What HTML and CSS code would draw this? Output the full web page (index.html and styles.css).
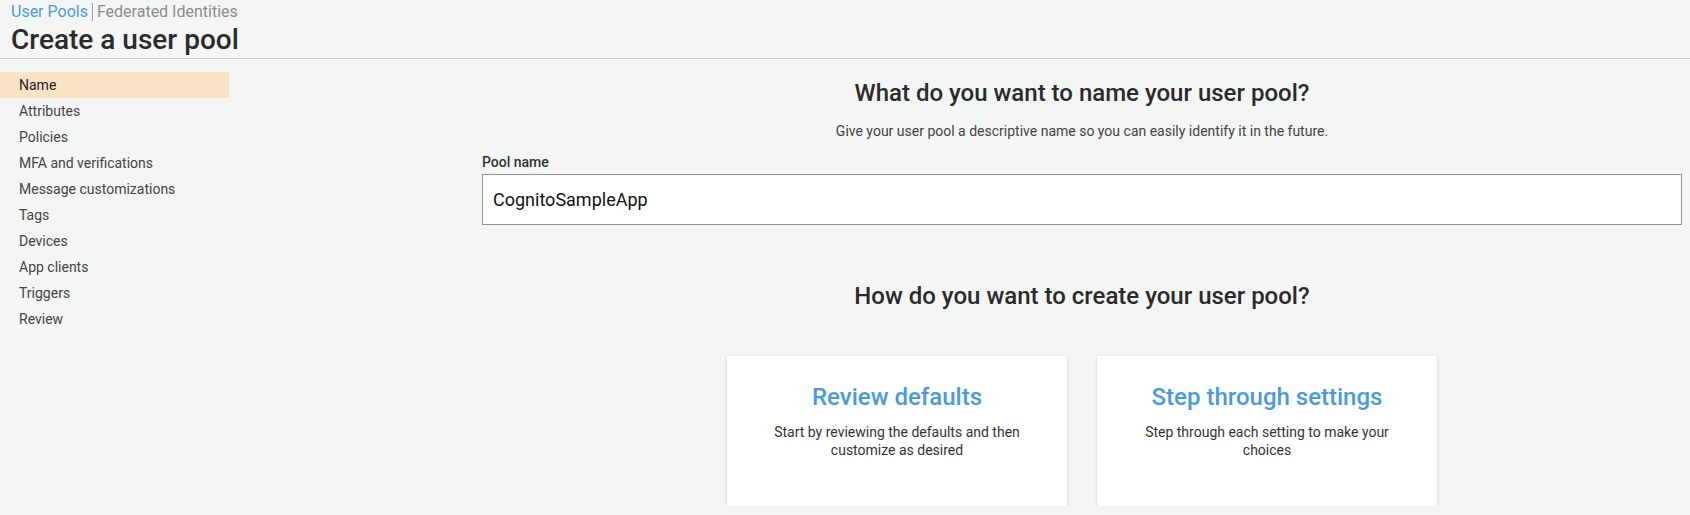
FILE: index.html
```html
<!DOCTYPE html>
<html lang="en">
<head>
<meta charset="utf-8">
<title>Create a user pool</title>
<link rel="stylesheet" href="styles.css">
</head>
<body>
<header class="page-header">
  <div class="crumbs"><a class="crumb-active" href="#">User Pools</a><span class="crumb-sep"></span><a class="crumb" href="#">Federated Identities</a></div>
  <h1 class="page-title">Create a user pool</h1>
</header>
<div class="layout">
  <nav class="steps">
    <div class="step step-current">Name</div>
    <div class="step">Attributes</div>
    <div class="step">Policies</div>
    <div class="step">MFA and verifications</div>
    <div class="step">Message customizations</div>
    <div class="step">Tags</div>
    <div class="step">Devices</div>
    <div class="step">App clients</div>
    <div class="step">Triggers</div>
    <div class="step">Review</div>
  </nav>
  <main class="content">
    <h2 class="section-title">What do you want to name your user pool?</h2>
    <p class="section-desc">Give your user pool a descriptive name so you can easily identify it in the future.</p>
    <label class="field-label" for="pool">Pool name</label>
    <input class="field-input" id="pool" type="text" value="CognitoSampleApp">
    <h2 class="section-title section-title-2">How do you want to create your user pool?</h2>
    <div class="choices">
      <div class="choice">
        <div class="choice-title">Review defaults</div>
        <div class="choice-desc">Start by reviewing the defaults and then customize as desired</div>
      </div>
      <div class="choice">
        <div class="choice-title">Step through settings</div>
        <div class="choice-desc">Step through each setting to make your choices</div>
      </div>
    </div>
  </main>
</div>
</body>
</html>
```
FILE: styles.css
```css
* { box-sizing: border-box; }
html, body { margin: 0; padding: 0; }
body {
  background: #f4f5f5;
  font-family: Roboto, "Liberation Sans", sans-serif;
  color: #333;
  overflow: hidden;
}
.page-header {
  padding: 2px 0 0 11px;
  border-bottom: 1px solid #cdcfcf;
  height: 59px;
}
.crumbs {
  display: flex;
  align-items: center;
  font-size: 16px;
  line-height: 19px;
}
.crumb-active { color: #4d9ad6; text-decoration: none; }
.crumb { color: #8a8c8c; text-decoration: none; }
.crumb-sep {
  display: inline-block;
  width: 1px;
  height: 18px;
  background: #9a9c9c;
  margin: 0 4px 0 4px;
}
.page-title {
  margin: 2px 0 0 0;
  font-size: 28px;
  line-height: 33px;
  font-weight: 500;
  color: #2b2b2b;
}
.layout {
  display: flex;
  align-items: flex-start;
}
.steps {
  width: 229px;
  flex: none;
  padding-top: 13px;
}
.step {
  height: 26px;
  line-height: 26px;
  padding-left: 19px;
  font-size: 14px;
  color: #444;
}
.step-current { background: #f9e5c6; color: #222; }
.content {
  flex: 1;
  margin-left: 253px;
  margin-right: 8px;
  display: flex;
  flex-direction: column;
  padding-top: 20px;
}
.section-title {
  margin: 0;
  text-align: center;
  font-size: 24px;
  line-height: 28px;
  font-weight: 500;
  color: #2b2b2b;
}
.section-desc {
  margin: 14px 0 0 0;
  text-align: center;
  font-size: 14px;
  line-height: 20px;
  color: #444;
}
.field-label {
  margin-top: 12px;
  font-size: 14px;
  line-height: 18px;
  font-weight: 500;
  color: #333;
}
.field-input {
  margin-top: 3px;
  height: 51px;
  border: 1px solid #8f9393;
  background: #fff;
  padding: 0 10px;
  font-family: Roboto, "Liberation Sans", sans-serif;
  font-size: 18px;
  color: #111;
  outline: none;
}
.section-title-2 { margin-top: 57px; }
.choices {
  margin-top: 46px;
  display: flex;
  justify-content: center;
  gap: 30px;
}
.choice {
  width: 340px;
  height: 150px;
  background: #fff;
  box-shadow: 0 1px 3px rgba(0,0,0,0.16);
  padding: 27px 40px 0;
  text-align: center;
}
.choice-title {
  font-size: 24px;
  line-height: 28px;
  font-weight: 500;
  color: #4a9bd8;
}
.choice-desc {
  margin-top: 12px;
  font-size: 14px;
  line-height: 18px;
  color: #333;
}
```
